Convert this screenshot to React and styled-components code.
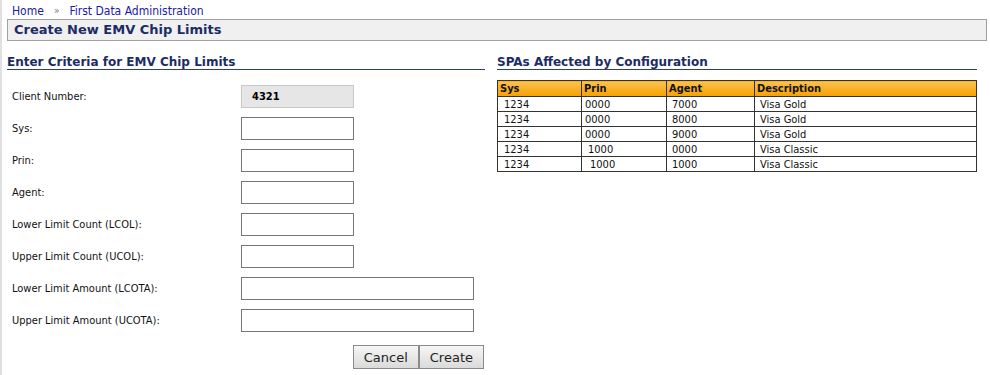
import styled, { createGlobalStyle } from 'styled-components';

const GlobalStyle = createGlobalStyle`
    html, body {
        margin: 0;
        padding: 0;
        background: #ffffff;
    }
    body {
        font-family: 'DejaVu Sans Condensed', 'DejaVu Sans', sans-serif;
        color: #000;
    }
`;

const fields = [
    { label: 'Sys:', wide: false },
    { label: 'Prin:', wide: false },
    { label: 'Agent:', wide: false },
    { label: 'Lower Limit Count (LCOL):', wide: false },
    { label: 'Upper Limit Count (UCOL):', wide: false },
    { label: 'Lower Limit Amount (LCOTA):', wide: true },
    { label: 'Upper Limit Amount (UCOTA):', wide: true },
];

const spas = [
    { sys: '1234', prin: '0000', agent: '7000', desc: 'Visa Gold' },
    { sys: '1234', prin: '0000', agent: '8000', desc: 'Visa Gold' },
    { sys: '1234', prin: '0000', agent: '9000', desc: 'Visa Gold' },
    { sys: '1234', prin: '1000', agent: '0000', desc: 'Visa Classic' },
    { sys: '1234', prin: '1000', agent: '1000', desc: 'Visa Classic' },
];

const App = () => {
    return (
        <Page>
            <GlobalStyle />
            <Breadcrumb>
                <Crumb>Home</Crumb>
                <Sep>»</Sep>
                <Crumb>First Data Administration</Crumb>
            </Breadcrumb>
            <TitleBar>Create New EMV Chip Limits</TitleBar>
            <Columns>
                <Section>
                    <SectionTitle>Enter Criteria for EMV Chip Limits</SectionTitle>
                    <Form>
                        <Row>
                            <Label>Client Number:</Label>
                            <ReadOnlyBox>4321</ReadOnlyBox>
                        </Row>
                        {fields.map((f) => (
                            <Row key={f.label}>
                                <Label>{f.label}</Label>
                                <Input $wide={f.wide} />
                            </Row>
                        ))}
                    </Form>
                    <Buttons>
                        <Btn>Cancel</Btn>
                        <Btn>Create</Btn>
                    </Buttons>
                </Section>
                <Section $right>
                    <SectionTitle>SPAs Affected by Configuration</SectionTitle>
                    <Table>
                        <colgroup>
                            <col style={{ width: 84 }} />
                            <col style={{ width: 85 }} />
                            <col style={{ width: 88 }} />
                            <col />
                        </colgroup>
                        <thead>
                            <tr>
                                <Th>Sys</Th>
                                <Th>Prin</Th>
                                <Th>Agent</Th>
                                <Th>Description</Th>
                            </tr>
                        </thead>
                        <tbody>
                            {spas.map((s, index) => (
                                <tr key={index}>
                                    <Td $pad={6} $drop={index > 0}>{s.sys}</Td>
                                    <Td $pad={s.prin === '1000' ? 6 + (index - 3) * 2 : 3} $drop={index < 3}>{s.prin}</Td>
                                    <Td $pad={5}>{s.agent}</Td>
                                    <Td $pad={5}>{s.desc}</Td>
                                </tr>
                            ))}
                        </tbody>
                    </Table>
                </Section>
            </Columns>
        </Page>
    );
};

const Page = styled.div`
    min-height: 375px;
    box-sizing: border-box;
    border-left: 2px solid #e0e0e0;
    padding: 2px 3px 0 5px;
`;
const Breadcrumb = styled.div`
    display: flex;
    align-items: center;
    gap: 9px;
    padding-left: 5px;
    height: 17px;
    font-family: 'DejaVu Sans Condensed', 'DejaVu Sans', sans-serif;
    font-size: 12px;
`;
const Crumb = styled.span`
    color: #1a1aa6;
`;
const Sep = styled.span`
    color: #777;
    font-size: 10px;
    margin: 0 1px;
`;
const TitleBar = styled.div`
    height: 20px;
    line-height: 20px;
    background: #f0f0f0;
    border: 1px solid #a0a0a0;
    padding-left: 6px;
    font-family: 'DejaVu Sans', sans-serif;
    font-weight: bold;
    font-size: 13px;
    color: #1c2c66;
`;
const Columns = styled.div`
    display: flex;
    gap: 12px;
    margin-top: 14px;
`;
const Section = styled.div`
    width: ${(p) => (p.$right ? '480px' : '478px')};
`;
const SectionTitle = styled.div`
    font-family: 'DejaVu Sans', sans-serif;
    font-weight: bold;
    font-size: 12px;
    color: #1c2c66;
    padding-bottom: 0;
    border-bottom: 1px solid #2a3f7a;
    line-height: 14px;
`;
const Form = styled.div`
    display: flex;
    flex-direction: column;
    gap: 9px;
    margin-top: 15px;
`;
const Row = styled.div`
    display: flex;
    align-items: center;
    height: 23px;
`;
const Label = styled.div`
    width: 229px;
    padding-left: 5px;
    font-size: 11px;
    color: #111;
`;
const ReadOnlyBox = styled.div`
    box-sizing: border-box;
    width: 113px;
    height: 23px;
    line-height: 21px;
    padding-left: 10px;
    background: #e6e6e6;
    border: 1px solid #c8c8c8;
    font-weight: bold;
    font-size: 11px;
`;
const Input = styled.input`
    box-sizing: border-box;
    width: ${(p) => (p.$wide ? '233px' : '113px')};
    height: 23px;
    margin: 0;
    border: 1px solid #767676;
    background: #fff;
    outline: none;
`;
const Buttons = styled.div`
    display: flex;
    justify-content: flex-end;
    gap: 0;
    margin-top: 13px;
    padding-right: 1px;
`;
const Btn = styled.button`
    box-sizing: border-box;
    height: 24px;
    margin: 0;
    padding: 0 10px;
    border: 1px solid #8a8a8a;
    background: linear-gradient(#f6f6f6, #dadada);
    font-family: 'DejaVu Sans', sans-serif;
    font-size: 13px;
    color: #222;
`;
const Table = styled.table`
    width: 480px;
    margin-top: 10px;
    border-collapse: collapse;
    table-layout: fixed;
    border: 1px solid #222;
    font-size: 11px;
`;
const Th = styled.th`
    height: 15px;
    padding: 0 2px;
    text-align: left;
    font-family: 'DejaVu Sans Condensed', 'DejaVu Sans', sans-serif;
    font-size: 11px;
    font-weight: bold;
    color: #111;
    background: linear-gradient(#fcc24f, #f5a100);
    border: 1px solid #333;
`;
const Td = styled.td`
    height: ${(p) => (p.$drop ? '13px' : '14px')};
    padding: ${(p) => (p.$drop ? '1px' : '0')} 2px 0 ${(p) => p.$pad}px;
    line-height: 13px;
    border: 1px solid #333;
    color: #111;
    white-space: nowrap;
`;

export default App;
